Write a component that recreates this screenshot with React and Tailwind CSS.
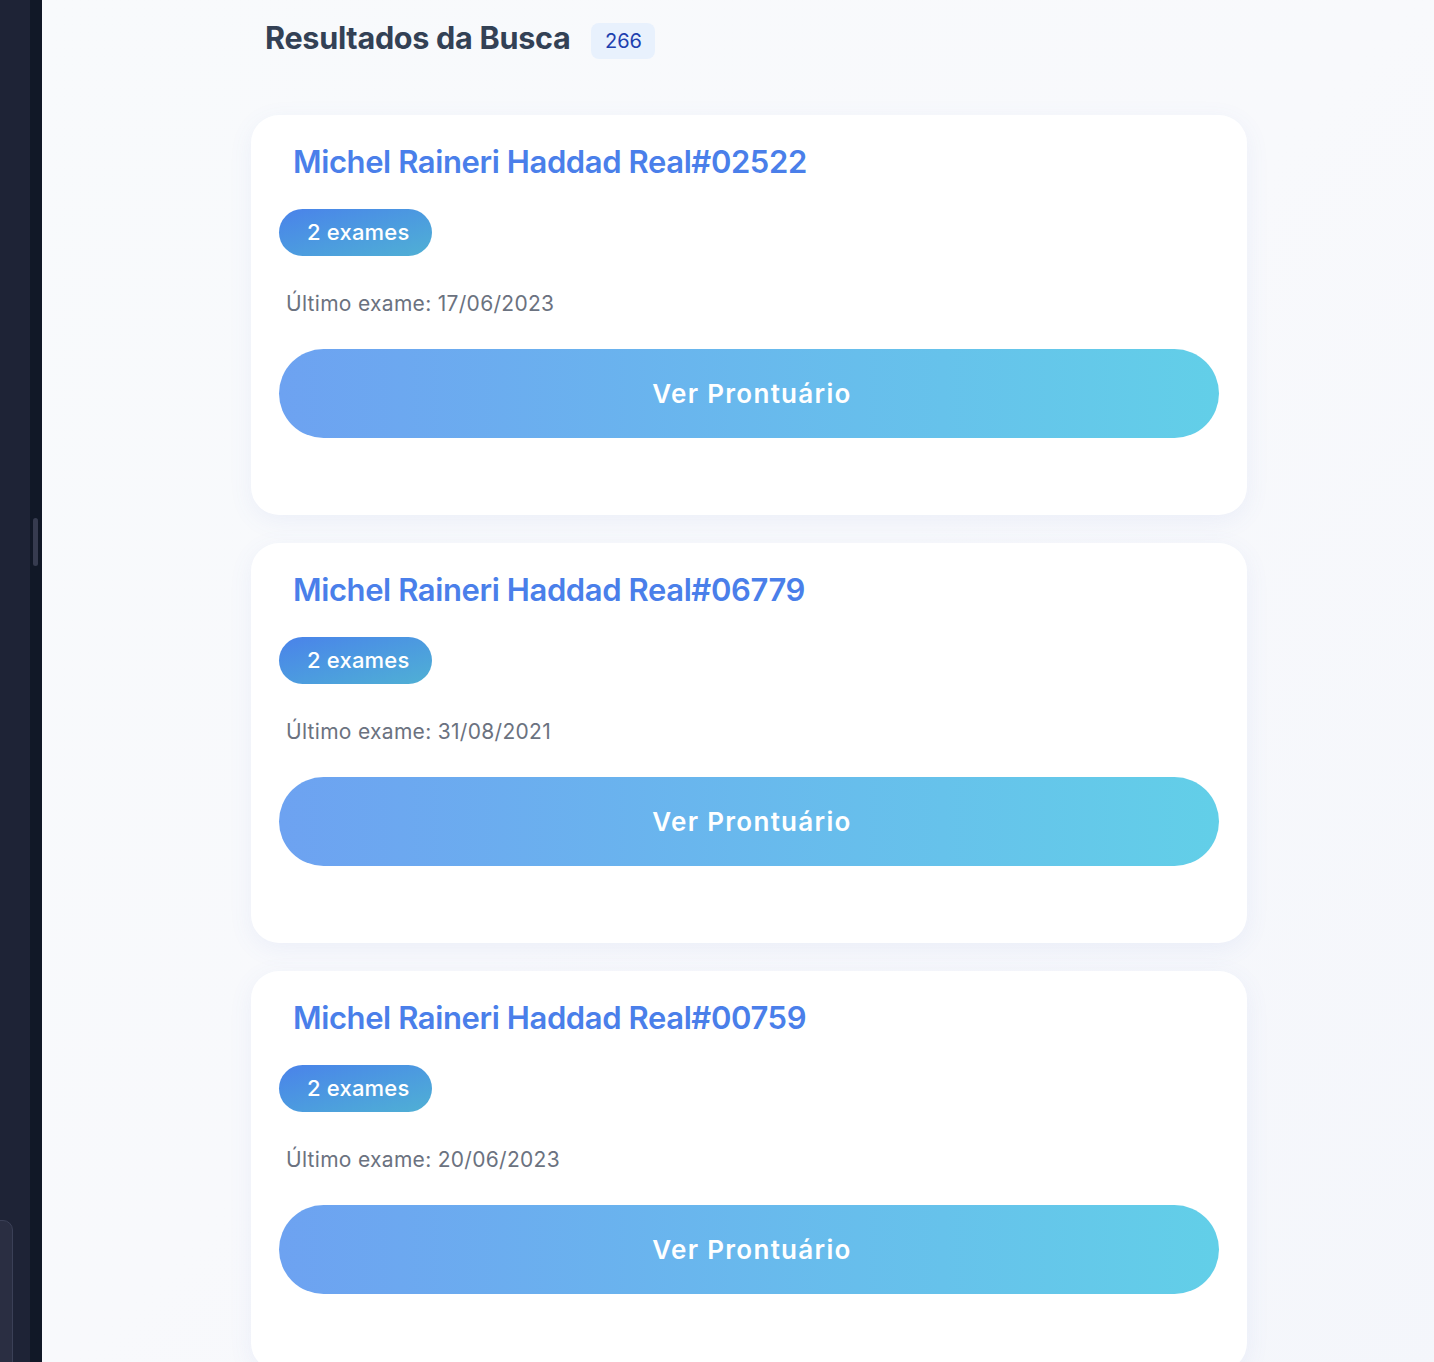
import React from "react";

const patients = [
  { name: "Michel Raineri Haddad Real#02522", count: 2, last: "17/06/2023" },
  { name: "Michel Raineri Haddad Real#06779", count: 2, last: "31/08/2021" },
  { name: "Michel Raineri Haddad Real#00759", count: 2, last: "20/06/2023" },
];

function Card({ p }) {
  return (
    <div className="bg-white rounded-[28px] shadow-[0_6px_24px_rgba(90,120,210,0.08)] pt-[27px] px-[28px] pb-[77px]">
      <h2 className="ml-[14px] text-[31px] leading-[40px] font-semibold tracking-[-0.4px] text-[#4a7fea]">
        {p.name}
      </h2>
      <div className="mt-[27px] inline-flex h-[47px] items-center rounded-full pl-[28px] pr-[22px] bg-gradient-to-br from-[#4a82ea] to-[#50b0d4] text-white text-[22px] font-medium tracking-[0.2px]">
        {p.count} exames
      </div>
      <p className="mt-[34px] ml-[7px] text-[21px] leading-[28px] tracking-[0.3px] text-[#6b7280]">
        Último exame: {p.last}
      </p>
      <button className="mt-[31px] w-full h-[89px] rounded-full pl-[6px] bg-gradient-to-r from-[#6da2f1] to-[#62cfe8] text-white text-[26px] font-semibold tracking-[1.3px]">
        Ver Prontuário
      </button>
    </div>
  );
}

export default function App() {
  return (
    <div className="flex min-h-screen font-['Inter','Noto_Sans',sans-serif]">
      <aside className="flex w-[42px] shrink-0">
        <div className="relative w-[30px] bg-[#1e2336]">
          <div className="absolute right-[17px] top-[1220px] w-[80px] h-[200px] rounded-[10px] bg-[#2a2e42] border border-[#3b4057]" />
        </div>
        <div className="relative w-[12px] bg-[#111827]">
          <div className="absolute left-[3px] top-[518px] w-[5px] h-[48px] rounded-full bg-[#363b4f]" />
        </div>
      </aside>
      <main className="flex-1 bg-gradient-to-br from-[#f8fafc] via-[#f8f9fc] to-[#f4f6fb] pb-[40px]">
        <div className="ml-[209px] w-[996px]">
          <div className="pt-[20px] pl-[14px] flex items-center gap-[21px] h-[59px]">
            <h1 className="-mt-[3px] text-[30.6px] leading-[36px] font-bold tracking-[-0.3px] text-[#334155]">
              Resultados da Busca
            </h1>
            <span className="mt-[3px] h-[36px] w-[64px] justify-center flex items-center rounded-lg bg-[#e8f1fd] text-[#1e40af] text-[20px]">
              266
            </span>
          </div>
          <div className="mt-[56px] flex flex-col gap-[28px]">
            {patients.map((p) => (
              <Card key={p.name} p={p} />
            ))}
          </div>
        </div>
      </main>
    </div>
  );
}
